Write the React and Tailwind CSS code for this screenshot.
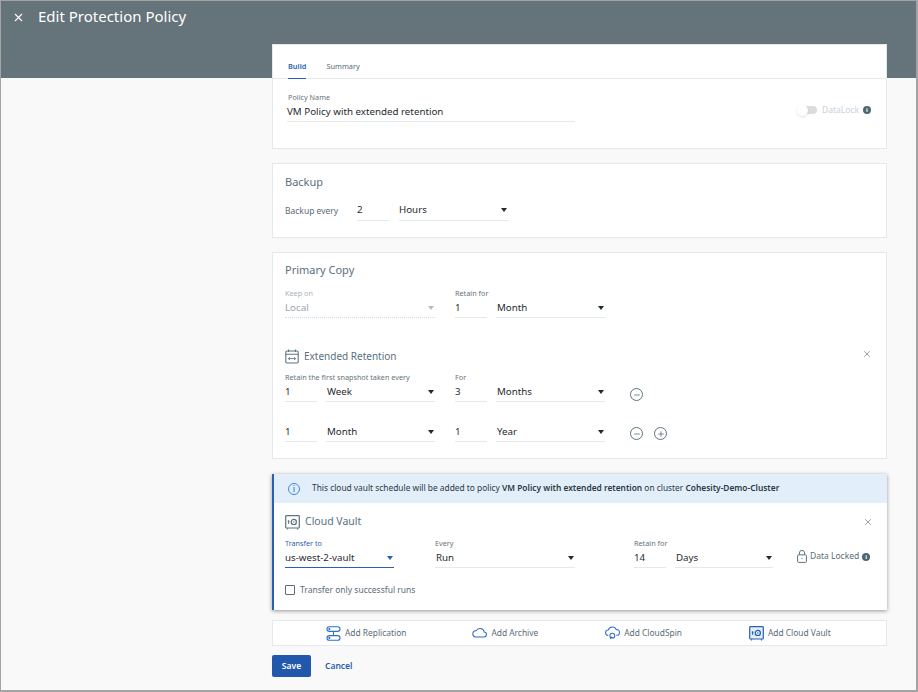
import { X, Minus, Plus } from "lucide-react";

const Caret = ({ color = "border-t-[#1f2a30]" }) => (
  <span className={`w-0 h-0 border-x-[3.5px] border-x-transparent border-t-[4px] ${color}`} />
);

const Label = ({ children, className = "text-[#65737a]" }) => (
  <div className={`text-[7.25px] leading-[11px] h-[11px] whitespace-nowrap ${className}`}>{children}</div>
);

const NumberField = ({ label, value, width = "w-[32px]" }) => (
  <div className={`${width} shrink-0`}>
    <Label>{label}</Label>
    <div className="h-[18px] mt-[1px] border-b border-[#e4e9ec] text-[9.75px] leading-[15px] text-[#1f2a30]">{value}</div>
  </div>
);

const SelectField = ({ label, value, width = "w-[109px]" }) => (
  <div className={`${width} shrink-0`}>
    <Label>{label}</Label>
    <div className="h-[18px] mt-[1px] border-b border-[#e4e9ec] flex items-start justify-between text-[9.75px] leading-[15px] text-[#1f2a30] pl-[1px]">
      <span>{value}</span>
      <span className="mt-[6px] mr-[1px] flex"><Caret /></span>
    </div>
  </div>
);

const Card = ({ children, className = "" }) => (
  <div className={`bg-white border border-[#e4e9ec] ${className}`}>{children}</div>
);

const InfoDot = () => (
  <span className="w-[8px] h-[8px] rounded-full bg-[#4f6672] flex items-center justify-center text-white text-[6px] leading-none font-bold">i</span>
);

const RoundIcon = ({ plus }) => (
  <span className="w-[13px] h-[13px] rounded-full border-[1.3px] border-[#5d7480] flex items-center justify-center text-[#5d7480]">
    {plus ? <Plus size={8} strokeWidth={2.5} /> : <Minus size={8} strokeWidth={2.5} />}
  </span>
);

const VaultIcon = ({ color = "#5d7480", fill = "none" }) => (
  <svg width="15" height="15" viewBox="0 0 15 15" fill={fill}>
    <rect x="0.7" y="0.7" width="13.6" height="12.3" rx="0.8" stroke={color} strokeWidth="1.2" />
    <path d="M2.5 13.2v1.2M12.5 13.2v1.2" stroke={color} strokeWidth="1.2" />
    <circle cx="8.8" cy="6.9" r="2.6" stroke={color} strokeWidth="1.2" />
    <circle cx="8.8" cy="6.9" r="0.7" fill={color} />
    <path d="M3.6 5.2v3.6M2.7 6.2h1.8" stroke={color} strokeWidth="1.1" />
  </svg>
);

const CalendarIcon = () => (
  <svg width="14" height="15" viewBox="0 0 14 15" fill="none" stroke="#5d7480" strokeWidth="1.1">
    <rect x="0.8" y="2" width="12.4" height="12" rx="1.2" />
    <path d="M0.8 5.2h12.4M3.6 0.5v2.6M10.4 0.5v2.6" />
    <path d="M3.4 9.6h7.2M4.8 8.2l-1.4 1.4 1.4 1.4M9.2 8.2l1.4 1.4-1.4 1.4" strokeWidth="0.9" />
  </svg>
);

const ReplicationIcon = () => (
  <svg width="15" height="15" viewBox="0 0 15 15" fill="none" stroke="#2f6fc4" strokeWidth="1.1">
    <rect x="1" y="0.8" width="13" height="4.6" rx="2.3" />
    <rect x="1" y="9.6" width="13" height="4.6" rx="2.3" />
    <path d="M7.5 5.4v4.2" />
    <circle cx="3.4" cy="3.1" r="0.5" />
    <circle cx="3.4" cy="11.9" r="0.5" />
  </svg>
);

const CloudIcon = () => (
  <svg width="15" height="11" viewBox="0 0 16 11" fill="none" stroke="#2f6fc4" strokeWidth="1.1">
    <path d="M4 10.2h8.6a2.6 2.6 0 0 0 .4-5.2A4.6 4.6 0 0 0 4.4 3.6 3.3 3.3 0 0 0 4 10.2z" />
  </svg>
);

const CloudSpinIcon = () => (
  <svg width="15" height="14" viewBox="0 0 16 14" fill="none" stroke="#2f6fc4" strokeWidth="1.1">
    <path d="M3.4 9.6A2.9 2.9 0 0 1 3.6 3.8 4.4 4.4 0 0 1 12 3.4a3 3 0 0 1 1 6h-1" />
    <circle cx="7.8" cy="9.8" r="2.6" />
    <path d="M5.6 13.2l1-2 1.6 1" />
  </svg>
);

const LockIcon = () => (
  <svg width="10" height="13" viewBox="0 0 10 13" fill="none" stroke="#5d7480" strokeWidth="1">
    <rect x="0.6" y="4.8" width="8.8" height="7.6" rx="0.8" />
    <path d="M2.4 4.8V3a2.6 2.6 0 0 1 5.2 0v1.8" />
    <circle cx="5" cy="8.6" r="0.6" fill="#5d7480" stroke="none" />
  </svg>
);

const AddAction = ({ icon, label }) => (
  <div className="flex items-center gap-[4px] text-[8.4px] text-[#5a6c76] whitespace-nowrap">
    {icon}
    <span>{label}</span>
  </div>
);

export default function App() {
  return (
    <div className="w-[918px] h-[692px] overflow-hidden bg-[#f9f9f9] border-t border-l border-r-2 border-b-2 border-[#a3a3a3] font-['Noto_Sans',sans-serif]">
      <div className="h-[77px] bg-[#65737a] flex items-start pl-[11px] pt-[4px] gap-[13px] text-white">
        <X size={13} strokeWidth={2} className="mt-[6px]" />
        <h1 className="text-[15px] leading-[22px] font-normal">Edit Protection Policy</h1>
      </div>

      <div className="-mt-[34px] ml-[271px] w-[615px]">
        <Card className="h-[105px]">
          <div className="h-[34px] border-b border-[#e4e9ec] flex gap-[20px] pl-[15px] pt-[16px] text-[7.4px] leading-[11px]">
            <div className="h-[18px] border-b border-[#2a5fb0] text-[#2a5fb0] font-semibold">Build</div>
            <div className="text-[#5a6c76]">Summary</div>
          </div>
          <div className="flex justify-between pl-[14px] pr-[15px] pt-[13px]">
            <div className="w-[288px]">
              <Label><span className="pl-[1px]">Policy Name</span></Label>
              <div className="h-[18px] mt-[1px] border-b border-[#e4e9ec] text-[9.75px] leading-[15px] text-[#1f2a30]">VM Policy with extended retention</div>
            </div>
            <div className="flex items-center gap-[4px] h-[18px] mt-[9px] text-[8.5px] text-[#c9d2d7]">
              <span className="relative w-[17px] h-[8px] rounded-full bg-[#dcdcdc] mr-[1px]">
                <span className="absolute -left-[3px] -top-[1.5px] w-[11px] h-[11px] rounded-full bg-white shadow-sm" />
              </span>
              <span>DataLock</span>
              <InfoDot />
            </div>
          </div>
        </Card>

        <Card className="mt-[14px] h-[75px] px-[12px] pt-[10px]">
          <div className="text-[11px] leading-[16px] text-[#5a7080]">Backup</div>
          <div className="flex items-start mt-[13px]">
            <span className="w-[72px] text-[8.5px] leading-[15px] text-[#5a6c76]">Backup every</span>
            <div className="w-[32px] h-[18px] border-b border-[#e4e9ec] text-[9.75px] leading-[13px] text-[#1f2a30]">2</div>
            <div className="w-[109px] ml-[10px] h-[18px] border-b border-[#e4e9ec] flex justify-between text-[9.75px] leading-[13px] text-[#1f2a30]">
              <span>Hours</span>
              <span className="mt-[5px] mr-[1px] flex"><Caret /></span>
            </div>
          </div>
        </Card>

        <Card className="mt-[14px] h-[207px] pl-[12px] pr-[15px] pt-[9px]">
          <div className="text-[11px] leading-[16px] text-[#5a7080]">Primary Copy</div>
          <div className="flex mt-[10px]">
            <div className="w-[150px] shrink-0">
              <Label className="text-[#a9b3b8]">Keep on</Label>
              <div className="h-[18px] mt-[1px] border-b border-dotted border-[#d5dbde] flex justify-between text-[9.75px] leading-[15px] text-[#9aa5ab]">
                <span>Local</span>
                <span className="mt-[6px] mr-[1px] flex"><Caret color="border-t-[#b3bcc1]" /></span>
              </div>
            </div>
            <div className="ml-[20px]"><NumberField label="Retain for" value="1" /></div>
            <div className="ml-[9px]"><SelectField label={"\u00a0"} value="Month" /></div>
          </div>

          <div className="flex items-center justify-between mt-[30px] h-[16px]">
            <div className="flex items-center gap-[5px] text-[10px] text-[#5a7080]">
              <CalendarIcon />
              <span>Extended Retention</span>
            </div>
            <X size={10} strokeWidth={1.6} className="text-[#5d7480] -mr-[1px] -mt-[5px]" />
          </div>

          <div className="flex items-start mt-[8px]">
            <NumberField label={<span>Retain the first snapshot taken every</span>} value="1" />
            <div className="ml-[9px]"><SelectField label={"\u00a0"} value="Week" /></div>
            <div className="ml-[20px]"><NumberField label="For" value="3" /></div>
            <div className="ml-[9px]"><SelectField label={"\u00a0"} value="Months" /></div>
            <div className="ml-[25px] mt-[16px]"><RoundIcon /></div>
          </div>
          <div className="flex items-start mt-[10px]">
            <NumberField label={"\u00a0"} value="1" />
            <div className="ml-[9px]"><SelectField label={"\u00a0"} value="Month" /></div>
            <div className="ml-[20px]"><NumberField label={"\u00a0"} value="1" /></div>
            <div className="ml-[9px]"><SelectField label={"\u00a0"} value="Year" /></div>
            <div className="ml-[25px] mt-[15px] flex gap-[11px]"><RoundIcon /><RoundIcon plus /></div>
          </div>
        </Card>

        <div className="mt-[15px] h-[136px] bg-white border-l-2 border-[#2a5fb0] shadow-[0_1px_4px_rgba(0,0,0,0.4)]">
          <div className="h-[29px] bg-[#e2eefa] flex items-center pl-[14px] gap-[12px] text-[8.37px] text-[#2c3a42] whitespace-nowrap">
            <span className="w-[12px] h-[12px] rounded-full border border-[#3f8ae0] flex items-center justify-center text-[#3f8ae0] text-[8px] leading-none font-semibold">i</span>
            <span>This cloud vault schedule will be added to policy <span className="font-semibold">VM Policy with extended retention</span> on cluster <span className="font-semibold">Cohesity-Demo-Cluster</span></span>
          </div>
          <div className="pl-[11px] pr-[15px]">
            <div className="flex items-center justify-between h-[18px] mt-[10px]">
              <div className="flex items-center gap-[5px] text-[10.5px] text-[#5a7080]">
                <VaultIcon />
                <span>Cloud Vault</span>
              </div>
              <X size={10} strokeWidth={1.6} className="text-[#5d7480] -mr-[1px]" />
            </div>
            <div className="flex items-start mt-[7px]">
              <div className="w-[109px] shrink-0">
                <Label className="text-[#2a5fb0]">Transfer to</Label>
                <div className="h-[18px] mt-[1px] border-b-[1.5px] border-[#2a5fb0] flex justify-between text-[9.75px] leading-[15px] text-[#1f2a30]">
                  <span>us-west-2-vault</span>
                  <span className="mt-[6px] mr-[1px] flex"><Caret color="border-t-[#2a5fb0]" /></span>
                </div>
              </div>
              <div className="ml-[41px]"><SelectField label="Every" value="Run" width="w-[140px]" /></div>
              <div className="ml-[59px]"><NumberField label="Retain for" value="14" /></div>
              <div className="ml-[9px]"><SelectField label={"\u00a0"} value="Days" width="w-[98px]" /></div>
              <div className="ml-[24px] mt-[12px] flex items-center gap-[3px] text-[8.5px] text-[#5a6c76] whitespace-nowrap">
                <LockIcon />
                <span>Data Locked</span>
                <InfoDot />
              </div>
            </div>
            <div className="flex items-center gap-[5px] mt-[16px] text-[8.5px] text-[#5a6c76]">
              <span className="w-[10px] h-[10px] rounded-[1px] border border-[#5d6b73]" />
              <span>Transfer only successful runs</span>
            </div>
          </div>
        </div>

        <Card className="mt-[10px] h-[26px] flex items-center pl-[53px]">
          <AddAction icon={<ReplicationIcon />} label="Add Replication" />
          <div className="ml-[66px]"><AddAction icon={<CloudIcon />} label="Add Archive" /></div>
          <div className="ml-[67px]"><AddAction icon={<CloudSpinIcon />} label="Add CloudSpin" /></div>
          <div className="ml-[67px]"><AddAction icon={<VaultIcon color="#2a5fb0" fill="#e2eefa" />} label="Add Cloud Vault" /></div>
        </Card>

        <div className="flex items-center mt-[9px] gap-[14px]">
          <button className="w-[39px] h-[22px] rounded-[2px] bg-[#2258ab] text-white text-[8.5px] font-semibold">Save</button>
          <button className="text-[8.5px] font-semibold text-[#2a5fb0]">Cancel</button>
        </div>
      </div>
    </div>
  );
}
